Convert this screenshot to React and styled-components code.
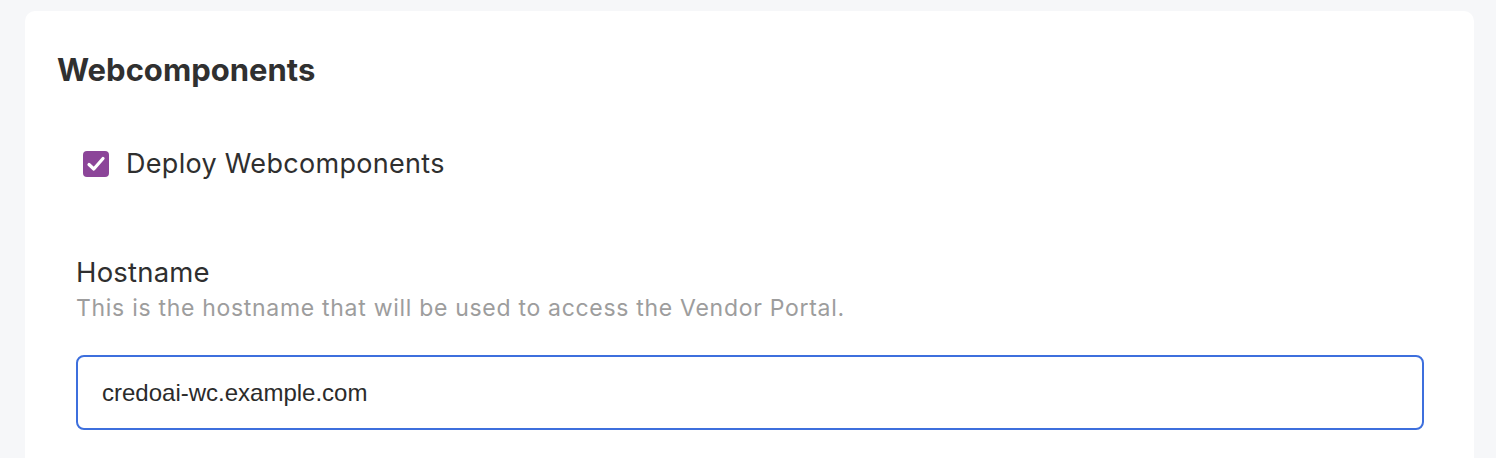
import styled, { createGlobalStyle } from 'styled-components';

const GlobalStyle = createGlobalStyle`
	html, body {
		margin: 0;
		padding: 0;
		background: #f6f7f9;
		font-family: Inter, "Noto Sans", sans-serif;
	}
`;

const Page = styled.div`
	padding: 11px 22px 0 25px;
`;

const Card = styled.section`
	background: #ffffff;
	border-radius: 10px;
	padding: 41px 50px 40px 32px;
	min-height: 460px;
	box-sizing: border-box;
`;

const Title = styled.h2`
	margin: 0;
	font-size: 31px;
	font-weight: 700;
	color: #303030;
	line-height: 36px;
`;

const CheckRow = styled.label`
	display: flex;
	align-items: center;
	gap: 17px;
	margin: 60px 0 0 26px;
	font-size: 27px;
	letter-spacing: 0.3px;
	line-height: 32px;
	color: #2f2f2f;
`;

const Box = styled.span`
	width: 26px;
	height: 26px;
	flex: none;
	border-radius: 4px;
	background: ${props => (props.checked ? '#8c4599' : '#fff')};
	display: flex;
	align-items: center;
	justify-content: center;
`;

const Field = styled.div`
	margin: 76px 0 0 19px;
	display: flex;
	flex-direction: column;
`;

const Label = styled.div`
	font-size: 27.5px;
	letter-spacing: 0.2px;
	color: #2f2f2f;
	line-height: 32px;
`;

const Hint = styled.div`
	font-size: 23px;
	letter-spacing: 0.7px;
	color: #9d9d9d;
	line-height: 30px;
	margin-top: 5px;
`;

const Input = styled.div`
	margin-top: 32px;
	height: 75px;
	box-sizing: border-box;
	border: 2px solid #3d6fdd;
	border-radius: 8px;
	padding: 0 24px;
	display: flex;
	align-items: center;
	font-family: "Liberation Sans", Arial, sans-serif;
	font-size: 24px;
	color: #2b2b2b;
`;

const App = () => {
	return (
		<>
			<GlobalStyle />
			<Page>
				<Card>
					<Title>Webcomponents</Title>
					<CheckRow>
						<Box checked>
							<svg width='22' height='22' viewBox='0 0 22 22'>
								<path
									d='M4 11.5 L8.8 16 L18 5.5'
									fill='none'
									stroke='#fff'
									strokeWidth='3.2'
									strokeLinecap='round'
									strokeLinejoin='round'
								/>
							</svg>
						</Box>
						Deploy Webcomponents
					</CheckRow>
					<Field>
						<Label>Hostname</Label>
						<Hint>This is the hostname that will be used to access the Vendor Portal.</Hint>
						<Input>credoai-wc.example.com</Input>
					</Field>
				</Card>
			</Page>
		</>
	);
};

export default App;
